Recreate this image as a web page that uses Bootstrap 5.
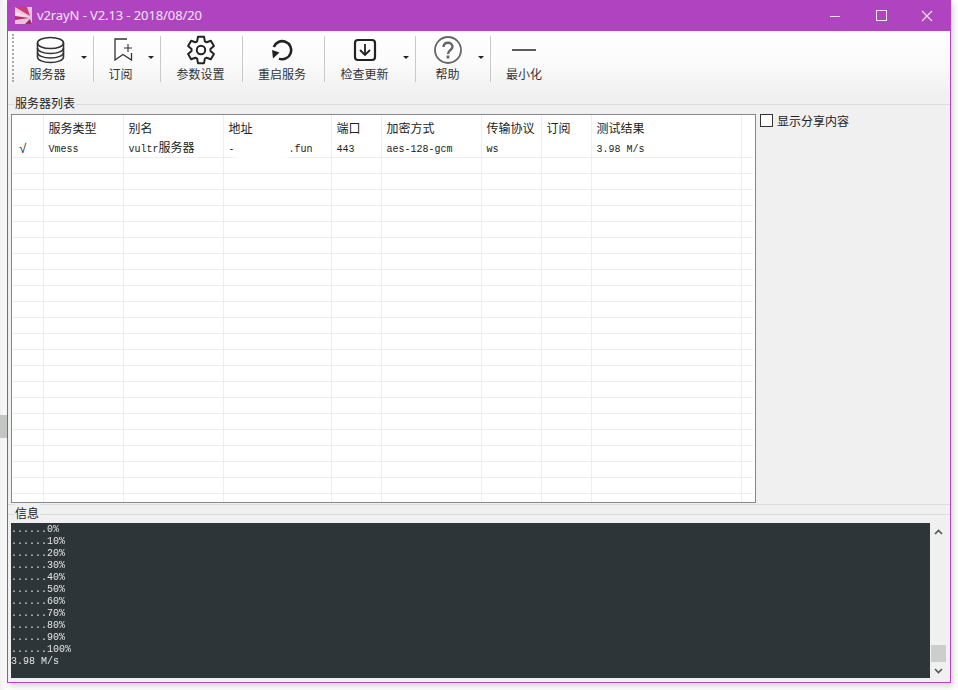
<!DOCTYPE html>
<html lang="zh-CN">
<head>
  <meta charset="UTF-8" />
  <title>v2rayN - V2.13 - 2018/08/20</title>
  <link href="https://cdn.jsdelivr.net/npm/bootstrap@5.3.0/dist/css/bootstrap.min.css" rel="stylesheet">
  <style>
    html, body { height: 690px; overflow: hidden; }
    body {
      background: #fff;
      font-family: "Noto Sans CJK SC", sans-serif;
      font-size: 12px;
      color: #222;
    }
    .desk { position: relative; width: 958px; height: 690px; padding-left: 7px; background: linear-gradient(90deg, #f0f0f0 0, #fff 7px); }
    .desk-tab { position: absolute; left: 0; top: 415px; width: 7px; height: 23px; background: #c4c6c4; }
    .win {
      width: 944px; height: 683px;
      background: #f0f0f0;
      border: 1px solid #b044c0; border-top: 0;
      box-shadow: 2px 3px 6px rgba(0,0,0,.18);
    }
    .titlebar { height: 31px; background: #b044c0; color: #f0e4f2; padding-left: 7px; }
    .title-text { font-family: "Noto Sans", sans-serif; font-size: 13px; margin-left: 5px; letter-spacing: -.1px; }
    .capt { width: 46px; height: 31px; }
    .toolbar { height: 65px; background: linear-gradient(#fff 0, #fbfbfb 50%, #efefef 100%); padding: 5px 0 0 4px; }
    .grip { width: 2px; height: 48px; border-left: 2px dotted #aaa; margin: -2px 3px 0 0; }
    .tool { height: 46px; border-right: 1px solid #c9c9c9; position: relative; }
    .tool .lbl { font-size: 12px; line-height: 16px; color: #333; margin-top: 2px; }
    .tool svg { display: block; overflow: visible; }
    .t1 { width: 77px; padding-right: 15px; }
    .t2 { width: 67px; padding-right: 13px; }
    .t3 { width: 82px; padding-right: 2px; }
    .t4 { width: 82px; padding-right: 3px; }
    .t5 { width: 91px; padding-right: 11px; }
    .t6 { width: 75px; padding-right: 11px; }
    .t7 { width: 68px; padding-right: 2px; border-right: 0; }
    .icon-box { height: 28px; }
    .caret-mark {
      position: absolute; right: 6px; top: 20px;
      border-left: 3px solid transparent; border-right: 3px solid transparent; border-top: 3px solid #222;
    }
    .sect { height: 18px; line-height: 13px; position: relative; padding-left: 7px; }
    .sect-line { position: absolute; left: 0; right: 0; top: 8px; border-top: 1px solid #dcdcdc; }
    .sect-name { position: relative; background: #f0f0f0; padding-right: 1px; color: #222; }
    .sect-info { height: 19px; margin-top: 1px; border-top: 1px solid #dcdcdc; line-height: 15px; }
    .sect-info .sect-line { top: 9px; }
    .grid-box {
      width: 745px; height: 389px; margin-left: 3px;
      background: #fff; border: 1px solid #828790; overflow: hidden;
    }
    .srv { table-layout: fixed; border-collapse: collapse; width: 741px; margin: 0; }
    .srv th, .srv td { border: 0; border-right: 1px solid #eee; border-bottom: 1px solid #eee; padding: 0 0 0 5px; white-space: nowrap; }
    .srv th:last-child, .srv td:last-child { border-right: 0; }
    .srv th { height: 25px; font-weight: 400; font-size: 12px; color: #222; border-bottom: 0; }
    .srv td { height: 16px; padding-top: 2px; line-height: 14px; font-family: "Liberation Mono", monospace; font-size: 10px; color: #222; }
    .srv td .zh { font-family: "Noto Sans CJK SC", sans-serif; font-size: 12px; line-height: 10px; }
    .srv td.tick { font-size: 13px; padding-left: 7px; }
    .smudge { display: inline-block; width: 54px; height: 22px; margin: -8px 0; background: #fff; filter: blur(2px); vertical-align: middle; }
    .side { padding: 0 0 0 4px; line-height: 13px; }
    .side .form-check-input { width: 13px; height: 13px; margin: 0 4px 0 0; border: 1px solid #333; border-radius: 0; background-color: #fff; flex: none; }
    .logwrap { height: 155px; margin-left: 3px; }
    .logbox {
      width: 919px; height: 155px; background: #2b3336; color: #e4e6e6;
      font-family: "Liberation Mono", monospace; font-size: 10px; line-height: 12px;
      padding-top: 1px; white-space: pre; overflow: hidden;
      opacity: .99;
    }
    .vscroll { width: 17px; height: 155px; padding: 6px 0 4px; }
    .thumb { width: 15px; height: 17px; background: #cdcdcd; margin: auto auto 6px; }
  </style>
</head>
<body>
<div class="desk">
  <div class="desk-tab"></div>
  <div class="win">
    <div class="titlebar d-flex align-items-center">
      <svg width="17" height="17" viewBox="0 0 17 17">
        <rect width="17" height="17" fill="#e6c4dc"/>
        <path d="M0 0H12L15 9Z" fill="#cf3a78"/>
        <path d="M0 4L15 10L0 9Z" fill="#f3dce8"/>
        <path d="M0 9L14 11L0 13Z" fill="#b92c6c"/>
        <path d="M0 14L14 12L8 17H0Z" fill="#ecc0d4"/>
        <path d="M10 17L15 12L17 17Z" fill="#9c2a60"/>
      </svg>
      <span class="title-text">v2rayN - V2.13 - 2018/08/20</span>
      <div class="ms-auto d-flex">
        <div class="capt d-flex align-items-center justify-content-center">
          <svg width="12" height="12" viewBox="0 0 12 12"><path d="M1 6.5H11" stroke="#f3e8f5" stroke-width="1"/></svg>
        </div>
        <div class="capt d-flex align-items-center justify-content-center">
          <svg width="12" height="12" viewBox="0 0 12 12"><rect x="1.5" y=".5" width="10" height="10" fill="none" stroke="#f3e8f5"/></svg>
        </div>
        <div class="capt d-flex align-items-center justify-content-center">
          <svg width="12" height="12" viewBox="0 0 12 12"><path d="M1 1L11 11M11 1L1 11" stroke="#f3e8f5" stroke-width="1.1"/></svg>
        </div>
      </div>
    </div>

    <div class="toolbar d-flex">
      <div class="grip"></div>
      <div class="tool t1 d-flex flex-column align-items-center">
        <div class="icon-box">
          <svg width="30" height="28" viewBox="-1 0 30 28" fill="none" stroke="#333" stroke-width="1.6">
            <path d="M3.5 7V21C3.5 24 9 26.5 16.5 26.5S29.5 24 29.5 21V7"/>
            <path d="M3.5 12C3.5 15 9 17.5 16.5 17.5S29.5 15 29.5 12M3.5 16.5C3.5 19.5 9 22 16.5 22S29.5 19.5 29.5 16.5"/>
            <ellipse cx="16.5" cy="7" rx="13" ry="5.5"/>
          </svg>
        </div>
        <div class="lbl">服务器</div>
        <span class="caret-mark"></span>
      </div>
      <div class="tool t2 d-flex flex-column align-items-center">
        <div class="icon-box">
          <svg width="24" height="28" viewBox="-1 0 24 28" fill="none" stroke="#333" stroke-width="1.3">
            <path d="M17 3H5V24L13 18.5L21.5 24V17"/>
            <path d="M14 12H22M18 8V16" stroke-width="1.1"/>
          </svg>
        </div>
        <div class="lbl">订阅</div>
        <span class="caret-mark"></span>
      </div>
      <div class="tool t3 d-flex flex-column align-items-center">
        <div class="icon-box">
          <svg width="28" height="28" viewBox="0 0 28 28" fill="none" stroke="#222" stroke-width="2" stroke-linejoin="round">
            <circle cx="14" cy="14" r="4.2"/>
            <path d="M10.14 5.32L10.96 .85H17.04L17.86 5.32L19.58 6.31L23.87 4.79L26.91 10.06L23.45 13V15L26.91 17.94L23.87 23.21L19.58 21.69L17.86 22.68L17.04 27.15H10.96L10.14 22.68L8.42 21.69L4.13 23.21L1.09 17.94L4.55 15V13L1.09 10.06L4.13 4.79L8.42 6.31Z"/>
          </svg>
        </div>
        <div class="lbl">参数设置</div>
      </div>
      <div class="tool t4 d-flex flex-column align-items-center">
        <div class="icon-box">
          <svg width="30" height="28" viewBox="0 0 30 28" fill="none" stroke="#222" stroke-width="2.6">
            <path d="M6.8 11A9 9 0 1 1 12 22.6"/>
            <path d="M5 14L12.5 16.5L6 22.5Z" fill="#222" stroke="none"/>
          </svg>
        </div>
        <div class="lbl">重启服务</div>
      </div>
      <div class="tool t5 d-flex flex-column align-items-center">
        <div class="icon-box">
          <svg width="30" height="28" viewBox="0 0 30 28" fill="none" stroke="#222">
            <rect x="5" y="4" width="20" height="20" rx="3" stroke-width="2.2"/>
            <path d="M15 8V19M10 14L15 19L20 14" stroke-width="1.8"/>
          </svg>
        </div>
        <div class="lbl">检查更新</div>
        <span class="caret-mark"></span>
      </div>
      <div class="tool t6 d-flex flex-column align-items-center">
        <div class="icon-box">
          <svg width="30" height="28" viewBox="0 0 30 28" fill="none" stroke="#666">
            <circle cx="15" cy="14" r="13" stroke-width="1.8"/>
            <path d="M10.5 11C10.5 8 12.5 6.8 15 6.8S19.5 8.3 19.5 10.8C19.5 14 15 14 15 18" stroke-width="2.4"/>
            <path d="M15 19.5V22.5" stroke-width="2.8"/>
          </svg>
        </div>
        <div class="lbl">帮助</div>
        <span class="caret-mark"></span>
      </div>
      <div class="tool t7 d-flex flex-column align-items-center">
        <div class="icon-box">
          <svg width="30" height="28" viewBox="0 0 30 28"><path d="M3 14H27" stroke="#333" stroke-width="1.6"/></svg>
        </div>
        <div class="lbl">最小化</div>
      </div>
    </div>

    <div class="sect">
      <div class="sect-line"></div>
      <span class="sect-name">服务器列表</span>
    </div>

    <div class="d-flex">
      <div class="grid-box">
        <table class="srv" id="srv">
          <colgroup>
            <col style="width:31px"><col style="width:80px"><col style="width:100px"><col style="width:108px"><col style="width:50px">
            <col style="width:100px"><col style="width:60px"><col style="width:50px"><col style="width:150px"><col style="width:12px">
          </colgroup>
          <thead>
            <tr><th></th><th>服务类型</th><th>别名</th><th>地址</th><th>端口</th><th>加密方式</th><th>传输协议</th><th>订阅</th><th>测试结果</th><th></th></tr>
          </thead>
          <tbody>
            <tr><td class="tick">√</td><td>Vmess</td><td>vultr<span class="zh">服务器</span></td><td>-<span class="smudge"></span>.fun</td><td>443</td><td>aes-128-gcm</td><td>ws</td><td></td><td>3.98 M/s</td><td></td></tr>
          </tbody>
        </table>
      </div>
      <div class="side d-flex align-items-start">
        <input class="form-check-input" type="checkbox" id="share">
        <label for="share">显示分享内容</label>
      </div>
    </div>

    <div class="sect sect-info">
      <div class="sect-line"></div>
      <span class="sect-name">信息</span>
    </div>

    <div class="logwrap d-flex">
      <div class="logbox">......0%
......10%
......20%
......30%
......40%
......50%
......60%
......70%
......80%
......90%
......100%
3.98 M/s</div>
      <div class="vscroll d-flex flex-column align-items-center">
        <svg width="9" height="6" viewBox="0 0 9 6"><path d="M1 5L4.5 1.5L8 5" fill="none" stroke="#555" stroke-width="1.6"/></svg>
        <div class="thumb"></div>
        <svg width="9" height="6" viewBox="0 0 9 6"><path d="M1 1L4.5 4.5L8 1" fill="none" stroke="#555" stroke-width="1.6"/></svg>
      </div>
    </div>
  </div>
</div>
<script>
  const body = document.querySelector("#srv tbody");
  for (let i = 0; i < 22; i++) {
    const tr = document.createElement("tr");
    for (let c = 0; c < 10; c++) tr.appendChild(document.createElement("td"));
    body.appendChild(tr);
  }
</script>
<script src="https://cdn.jsdelivr.net/npm/bootstrap@5.3.0/dist/js/bootstrap.bundle.min.js"></script>
</body>
</html>
